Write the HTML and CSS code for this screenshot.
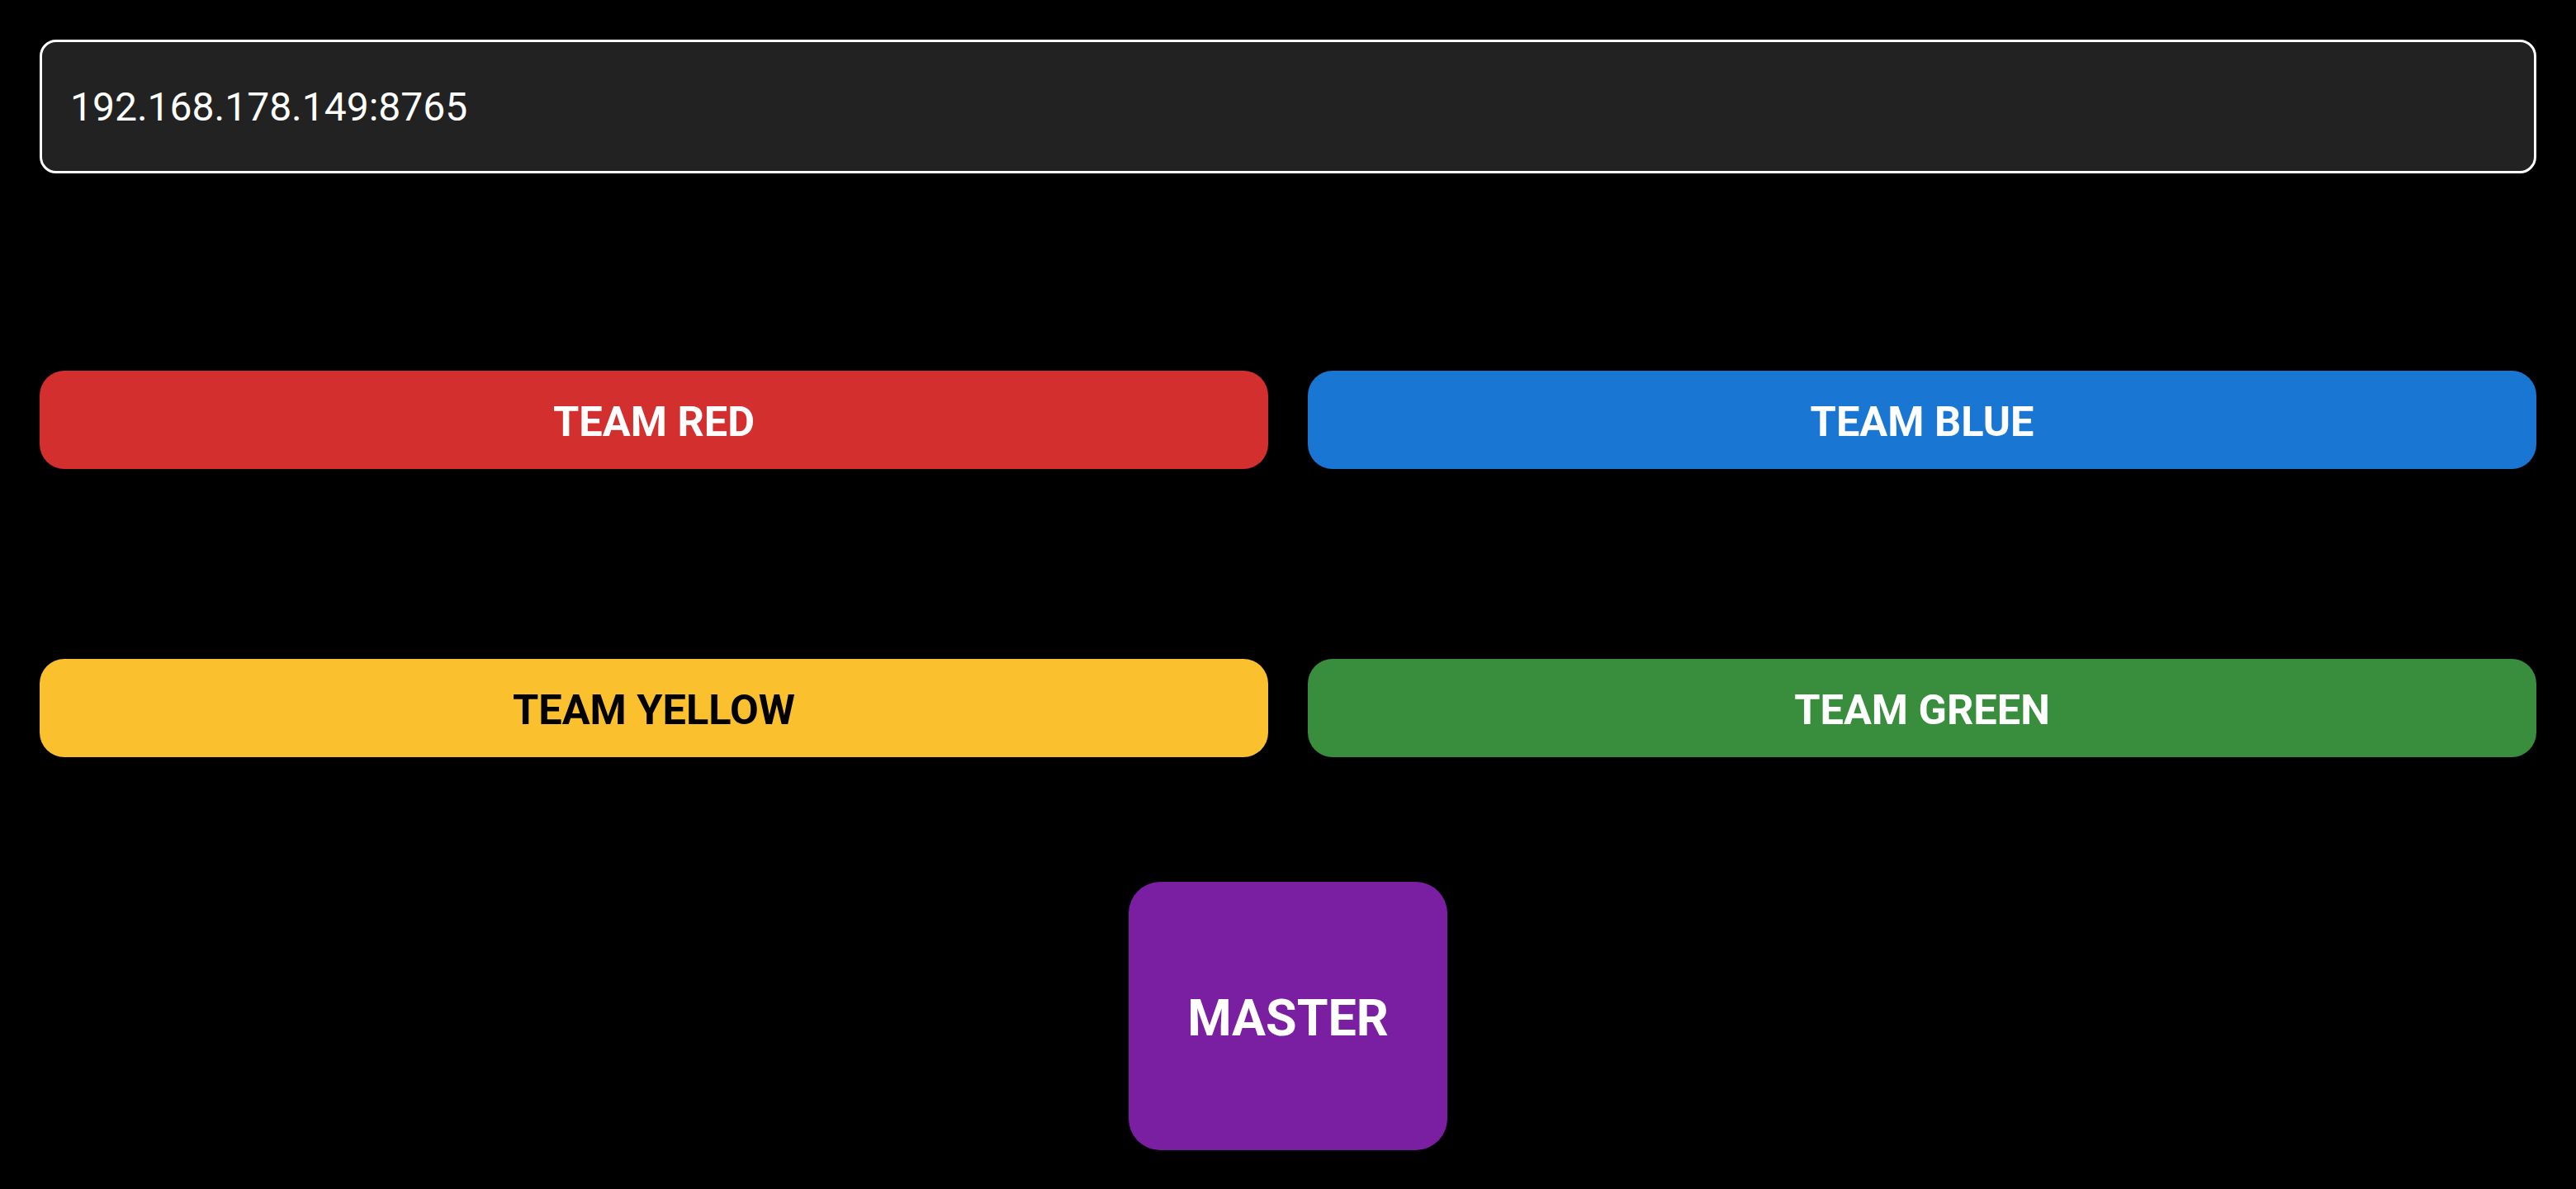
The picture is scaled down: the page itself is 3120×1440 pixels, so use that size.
FILE: index.html
```html
<!DOCTYPE html>
<html>
<head>
<meta charset="utf-8">
<link rel="stylesheet" href="styles.css">
</head>
<body>
<div class="page">
  <div class="field"><span class="field-text">192.168.178.149:8765</span></div>
  <div class="row row-first">
    <button class="team red">TEAM RED</button>
    <button class="team blue">TEAM BLUE</button>
  </div>
  <div class="row row-second">
    <button class="team yellow">TEAM YELLOW</button>
    <button class="team green">TEAM GREEN</button>
  </div>
  <div class="master-wrap">
    <button class="master">MASTER</button>
  </div>
</div>
</body>
</html>
```
FILE: styles.css
```css
html, body {
  margin: 0;
  padding: 0;
  background: #000;
  width: 3120px;
  height: 1440px;
  overflow: hidden;
}
.page {
  box-sizing: border-box;
  padding: 48px;
  display: flex;
  flex-direction: column;
  font-family: Roboto, "Noto Sans", sans-serif;
}
.field {
  box-sizing: border-box;
  height: 162px;
  border: 3px solid #fff;
  border-radius: 20px;
  background: #222222;
  display: flex;
  align-items: center;
  padding-left: 34px;
}
.field-text {
  color: #fff;
  font-size: 48px;
  font-weight: 400;
  letter-spacing: 0;
}
.row {
  display: flex;
  gap: 48px;
}
.row-first { margin-top: 239px; }
.row-second { margin-top: 230px; }
.team {
  flex: 1;
  height: 119px;
  border: none;
  border-radius: 30px;
  font-family: Roboto, "Noto Sans", sans-serif;
  font-weight: 700;
  font-size: 50.5px;
  color: #fff;
  padding: 3px 0 0;
}
.red { background: #d32f2f; }
.blue { background: #1976d2; }
.yellow { background: #fbc02d; color: #000; }
.green { background: #388e3c; }
.master-wrap {
  display: flex;
  justify-content: center;
  margin-top: 151px;
}
.master {
  width: 386px;
  height: 325px;
  border: none;
  border-radius: 38px;
  background: #7b1fa2;
  color: #fff;
  font-family: Roboto, "Noto Sans", sans-serif;
  font-weight: 700;
  font-size: 61px;
  padding: 5px 0 0;
}
```
